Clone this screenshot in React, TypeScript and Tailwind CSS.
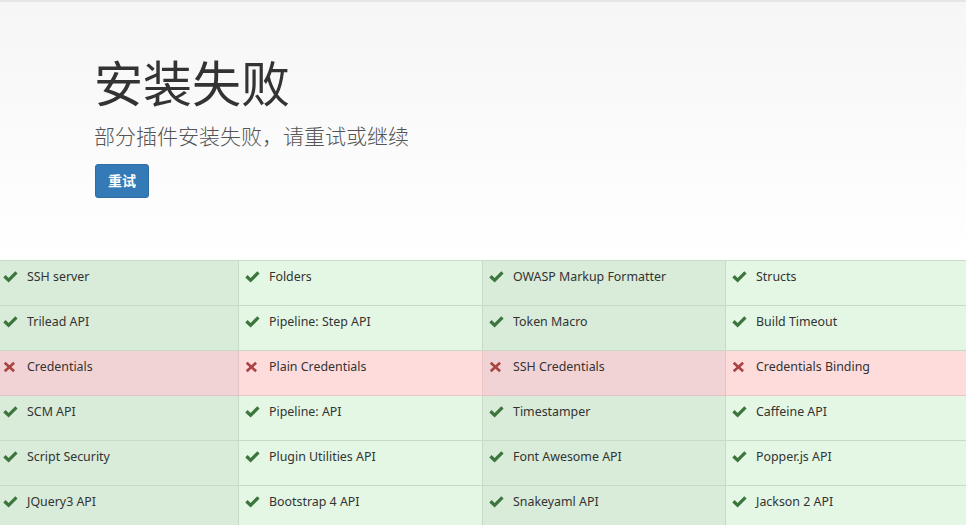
import React from 'react';

type Plugin = { name: string; ok: boolean };

const rows: Plugin[][] = [
  [
    { name: 'SSH server', ok: true },
    { name: 'Folders', ok: true },
    { name: 'OWASP Markup Formatter', ok: true },
    { name: 'Structs', ok: true },
  ],
  [
    { name: 'Trilead API', ok: true },
    { name: 'Pipeline: Step API', ok: true },
    { name: 'Token Macro', ok: true },
    { name: 'Build Timeout', ok: true },
  ],
  [
    { name: 'Credentials', ok: false },
    { name: 'Plain Credentials', ok: false },
    { name: 'SSH Credentials', ok: false },
    { name: 'Credentials Binding', ok: false },
  ],
  [
    { name: 'SCM API', ok: true },
    { name: 'Pipeline: API', ok: true },
    { name: 'Timestamper', ok: true },
    { name: 'Caffeine API', ok: true },
  ],
  [
    { name: 'Script Security', ok: true },
    { name: 'Plugin Utilities API', ok: true },
    { name: 'Font Awesome API', ok: true },
    { name: 'Popper.js API', ok: true },
  ],
  [
    { name: 'JQuery3 API', ok: true },
    { name: 'Bootstrap 4 API', ok: true },
    { name: 'Snakeyaml API', ok: true },
    { name: 'Jackson 2 API', ok: true },
  ],
];

function OkIcon() {
  return (
    <svg width="15" height="12" viewBox="0 0 15 12">
      <path d="M0.3 6.4 L2.6 4.1 L5.6 7.0 L12.3 0.3 L14.6 2.6 L5.6 11.5 Z" fill="#3c763d" />
    </svg>
  );
}

function FailIcon() {
  return (
    <svg width="13" height="12" viewBox="0 0 13 12">
      <path d="M0.8 2.7 L2.6 0.8 L6.4 4.3 L10.2 0.8 L12 2.7 L8.4 6 L12 9.3 L10.2 11.2 L6.4 7.7 L2.6 11.2 L0.8 9.3 L4.4 6 Z" fill="#a94442" />
    </svg>
  );
}

export default function App() {
  return (
    <div className="w-[966px] h-[525px] overflow-hidden bg-white font-['Noto_Sans','Noto_Sans_CJK_SC',sans-serif] text-[#333]">
      <div className="h-[260px] border-t-2 border-[#e6e6e6] bg-gradient-to-b from-[#f6f6f6] to-white pl-[95px] pt-[51px]">
        <h1 className="text-[49px] leading-[60px] font-normal text-[#333] -ml-[1px]">安装失败</h1>
        <p className="mt-[8px] text-[21px] leading-[30px] text-[#555] font-light -ml-[1px]">部分插件安装失败，请重试或继续</p>
        <button className="mt-[13px] w-[54px] h-[34px] rounded-[3px] border border-[#2e6da4] bg-[#337ab7] text-white text-[14px] font-bold leading-none">
          重试
        </button>
      </div>
      <div className="grid grid-cols-[239px_244px_243px_1fr] border-t border-[#c9dcc9]">
        {rows.map((row, ri) =>
          row.map((p, ci) => {
            const odd = ci % 2 === 0;
            const bg = p.ok
              ? odd
                ? 'bg-[#d9ebd9] border-[#c7d9c7]'
                : 'bg-[#e4f7e4] border-[#c7d9c7]'
              : odd
                ? 'bg-[#f2d3d5] border-[#e2c2c4]'
                : 'bg-[#fedcdc] border-[#ecc6c6]';
            return (
              <div
                key={`${ri}-${ci}`}
                className={`h-[45px] flex items-start pt-[7px] border-b ${ci === 0 ? 'pl-[3px]' : 'pl-[6px]'} ${ci < 3 ? 'border-r' : ''} ${bg}`}
              >
                <div className="w-[24px] h-[18px] flex items-center">{p.ok ? <OkIcon /> : <FailIcon />}</div>
                <span className="text-[12.4px] leading-[18px] text-[#333]">{p.name}</span>
              </div>
            );
          })
        )}
      </div>
    </div>
  );
}
